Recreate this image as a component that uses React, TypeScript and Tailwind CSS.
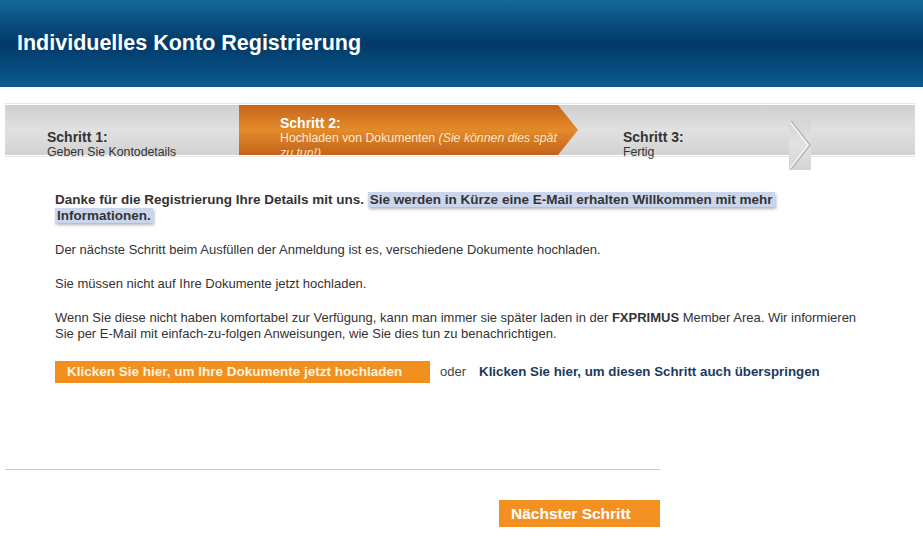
import React from 'react';

const font = { fontFamily: '"Liberation Sans", Arial, sans-serif' };

const Chevron: React.FC = () => (
  <div className="absolute left-[789px] top-[120px] h-[50px] w-[22px] bg-gradient-to-b from-[#d6d6d6] via-[#e2e2e2] to-[#d4d4d4]">
    <svg width="22" height="50" viewBox="0 0 22 50" className="block">
      <polyline points="2,1 21,25 2,49" fill="none" stroke="#bcbcbc" strokeWidth="2" />
      <polyline points="1,2 19,25 1,48" fill="none" stroke="#ffffff" strokeWidth="1.2" />
    </svg>
  </div>
);

const StepBar: React.FC = () => (
  <div className="relative mx-[5px] mt-[16px] w-[910px] border-y border-[#e6e6e6] bg-white py-[1px]">
    <div className="flex h-[50px] bg-gradient-to-b from-[#cfcfcf] via-[#e1e1e1] to-[#d2d2d2]">
      <div className="w-[234px] shrink-0 pl-[42px] pt-[25px] text-[#333]">
        <div className="text-[14px] font-bold leading-[15px]">Schritt 1:</div>
        <div className="text-[12.3px] leading-[15px]">Geben Sie Kontodetails</div>
      </div>
      <div
        className="relative h-[50px] w-[339px] shrink-0 overflow-hidden bg-gradient-to-b from-[#c7651a] via-[#e28b2b] to-[#c3631a] pl-[41px] pr-[20px] pt-[10px] text-white"
        style={{ clipPath: 'polygon(0 0, 319px 0, 339px 25px, 319px 50px, 0 50px)' }}
      >
        <div className="text-[14px] font-bold leading-[16px]">Schritt 2:</div>
        <div className="text-[12.3px] leading-[15px] text-[#fbe9d6]">
          Hochladen von Dokumenten <i className="text-[#fde3c6]">(Sie können dies spät zu tun!)</i>
        </div>
      </div>
      <div className="pl-[45px] pt-[25px] text-[#333]">
        <div className="text-[14px] font-bold leading-[15px]">Schritt 3:</div>
        <div className="text-[12.3px] leading-[15px]">Fertig</div>
      </div>
    </div>
  </div>
);

export default function App() {
  return (
    <div className="relative h-[547px] w-[923px] overflow-hidden bg-white" style={font}>
      <div className="h-[87px] bg-gradient-to-b from-[#16689a] via-[#023a69] to-[#0b5b90] pl-[17px] pt-[31px]">
        <h1 className="text-[21.5px] font-bold leading-[24px] text-white">Individuelles Konto Registrierung</h1>
      </div>

      <StepBar />
      <Chevron />

      <div className="ml-[55px] mt-[35px] w-[812px] text-[13px] leading-[16px] text-[#333]">
        <p className="text-[13.5px] font-bold">
          Danke für die Registrierung Ihre Details mit uns.{' '}
          <span className="box-decoration-clone bg-[#cbd6ec] px-[2px] shadow-[1px_2px_3px_rgba(0,0,0,0.3)]">
            Sie werden in Kürze eine E-Mail erhalten Willkommen mit mehr Informationen.
          </span>
        </p>
        <p className="mt-[18px]">
          Der nächste Schritt beim Ausfüllen der Anmeldung ist es, verschiedene Dokumente hochladen.
        </p>
        <p className="mt-[18px]">Sie müssen nicht auf Ihre Dokumente jetzt hochladen.</p>
        <p className="mt-[18px]">
          Wenn Sie diese nicht haben komfortabel zur Verfügung, kann man immer sie später laden in der{' '}
          <b>FXPRIMUS</b> Member Area. Wir informieren Sie per E-Mail mit einfach-zu-folgen Anweisungen, wie Sie
          dies tun zu benachrichtigen.
        </p>

        <div className="mt-[19px] flex items-center">
          <button className="h-[22px] w-[375px] bg-[#f1901f] pl-[12px] text-left text-[13.5px] font-bold text-[#fff3dc]">
            Klicken Sie hier, um Ihre Dokumente jetzt hochladen
          </button>
          <span className="ml-[10px] text-[#444]">oder</span>
          <a className="ml-[13px] text-[13.3px] font-bold text-[#1b3b5e]">
            Klicken Sie hier, um diesen Schritt auch überspringen
          </a>
        </div>
      </div>

      <div className="ml-[5px] mt-[86px] w-[655px] border-t border-[#c8c8c8]" />

      <div className="ml-[499px] mt-[30px] w-[161px]">
        <button className="h-[27px] w-[161px] bg-[#f29121] pl-[12px] text-left text-[15.5px] font-bold text-white">
          Nächster Schritt
        </button>
      </div>
    </div>
  );
}
